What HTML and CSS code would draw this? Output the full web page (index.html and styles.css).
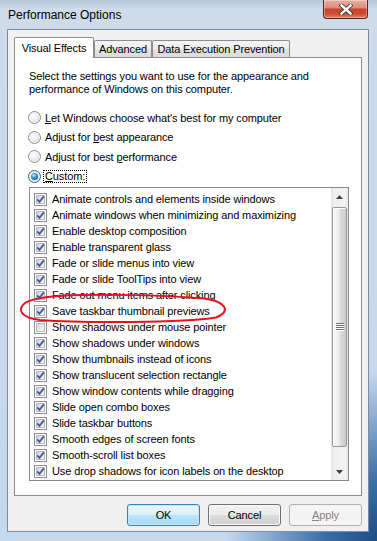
FILE: index.html
```html
<!DOCTYPE html>
<html lang="en">
<head>
<meta charset="utf-8">
<title>Performance Options</title>
<link rel="stylesheet" href="styles.css">
</head>
<body>
<div class="window">
  <div class="titlebar">
    <span class="title">Performance Options</span>
    <div class="close">
      <svg width="14" height="11" viewBox="0 0 14 11"><path class="x-out" d="M2.5 1.5 L11.5 9.5 M11.5 1.5 L2.5 9.5"/><path class="x-in" d="M2.5 1.5 L11.5 9.5 M11.5 1.5 L2.5 9.5"/></svg>
    </div>
  </div>
  <div class="client">
    <div class="tabs">
      <div class="tab active">Visual Effects</div>
      <div class="tab tab-adv">Advanced</div>
      <div class="tab tab-dep">Data Execution Prevention</div>
    </div>
    <div class="panel">
      <p class="intro">Select the settings you want to use for the appearance and<br>performance of Windows on this computer.</p>
      <div class="radios">
        <div class="radio-row"><span class="radio"></span><span class="lbl"><u>L</u>et Windows choose what's best for my computer</span></div>
        <div class="radio-row"><span class="radio"></span><span class="lbl">Adjust for <u>b</u>est appearance</span></div>
        <div class="radio-row"><span class="radio"></span><span class="lbl">Adjust for best <u>p</u>erformance</span></div>
        <div class="radio-row"><span class="radio on"><span class="dot"></span></span><span class="lbl focus"><u>C</u>ustom:</span></div>
      </div>
      <div class="listbox">
        <div class="items">
          <div class="item"><span class="check"><svg viewBox="0 0 11 11"><path d="M2.2 5.4 L4.4 7.9 L8.9 2.4"/></svg></span>Animate controls and elements inside windows</div>
          <div class="item"><span class="check"><svg viewBox="0 0 11 11"><path d="M2.2 5.4 L4.4 7.9 L8.9 2.4"/></svg></span>Animate windows when minimizing and maximizing</div>
          <div class="item"><span class="check"><svg viewBox="0 0 11 11"><path d="M2.2 5.4 L4.4 7.9 L8.9 2.4"/></svg></span>Enable desktop composition</div>
          <div class="item"><span class="check"><svg viewBox="0 0 11 11"><path d="M2.2 5.4 L4.4 7.9 L8.9 2.4"/></svg></span>Enable transparent glass</div>
          <div class="item"><span class="check"><svg viewBox="0 0 11 11"><path d="M2.2 5.4 L4.4 7.9 L8.9 2.4"/></svg></span>Fade or slide menus into view</div>
          <div class="item"><span class="check"><svg viewBox="0 0 11 11"><path d="M2.2 5.4 L4.4 7.9 L8.9 2.4"/></svg></span>Fade or slide ToolTips into view</div>
          <div class="item"><span class="check"><svg viewBox="0 0 11 11"><path d="M2.2 5.4 L4.4 7.9 L8.9 2.4"/></svg></span>Fade out menu items after clicking</div>
          <div class="item"><span class="check"><svg viewBox="0 0 11 11"><path d="M2.2 5.4 L4.4 7.9 L8.9 2.4"/></svg></span>Save taskbar thumbnail previews</div>
          <div class="item"><span class="check"></span>Show shadows under mouse pointer</div>
          <div class="item"><span class="check"><svg viewBox="0 0 11 11"><path d="M2.2 5.4 L4.4 7.9 L8.9 2.4"/></svg></span>Show shadows under windows</div>
          <div class="item"><span class="check"><svg viewBox="0 0 11 11"><path d="M2.2 5.4 L4.4 7.9 L8.9 2.4"/></svg></span>Show thumbnails instead of icons</div>
          <div class="item"><span class="check"><svg viewBox="0 0 11 11"><path d="M2.2 5.4 L4.4 7.9 L8.9 2.4"/></svg></span>Show translucent selection rectangle</div>
          <div class="item"><span class="check"><svg viewBox="0 0 11 11"><path d="M2.2 5.4 L4.4 7.9 L8.9 2.4"/></svg></span>Show window contents while dragging</div>
          <div class="item"><span class="check"><svg viewBox="0 0 11 11"><path d="M2.2 5.4 L4.4 7.9 L8.9 2.4"/></svg></span>Slide open combo boxes</div>
          <div class="item"><span class="check"><svg viewBox="0 0 11 11"><path d="M2.2 5.4 L4.4 7.9 L8.9 2.4"/></svg></span>Slide taskbar buttons</div>
          <div class="item"><span class="check"><svg viewBox="0 0 11 11"><path d="M2.2 5.4 L4.4 7.9 L8.9 2.4"/></svg></span>Smooth edges of screen fonts</div>
          <div class="item"><span class="check"><svg viewBox="0 0 11 11"><path d="M2.2 5.4 L4.4 7.9 L8.9 2.4"/></svg></span>Smooth-scroll list boxes</div>
          <div class="item"><span class="check"><svg viewBox="0 0 11 11"><path d="M2.2 5.4 L4.4 7.9 L8.9 2.4"/></svg></span>Use drop shadows for icon labels on the desktop</div>
        </div>
        <div class="scrollbar">
          <div class="sb-btn"><svg width="7" height="4" viewBox="0 0 7 4"><polygon points="3.5,0 7,4 0,4"/></svg></div>
          <div class="sb-track">
            <div class="thumb">
              <svg width="8" height="8" viewBox="0 0 8 8"><path class="g-d" d="M0 0.5 H8 M0 2.5 H8 M0 4.5 H8 M0 6.5 H8"/><path class="g-l" d="M0 1.5 H8 M0 3.5 H8 M0 5.5 H8 M0 7.5 H8"/></svg>
            </div>
          </div>
          <div class="sb-btn"><svg width="7" height="4" viewBox="0 0 7 4"><polygon points="0,0 7,0 3.5,4"/></svg></div>
        </div>
      </div>
    </div>
    <div class="buttons">
      <div class="btn btn-ok">OK</div>
      <div class="btn btn-cancel">Cancel</div>
      <div class="btn btn-apply"><span><u>A</u>pply</span></div>
    </div>
  </div>
  <svg class="annot" width="377" height="541" viewBox="0 0 377 541"><path d="M62 295.5 C105 294, 165 295, 204 298.5 C224 301, 233 311, 216 317.5 C182 323, 82 323, 40 320 C22 318, 16 310, 25 303 C32 298.5, 46 296.5, 68 295.5"/></svg>
</div>
</body>
</html>
```
FILE: styles.css
```css
* { box-sizing: border-box; }
html, body { margin: 0; padding: 0; }
body {
  width: 377px;
  height: 541px;
  overflow: hidden;
  font-family: "Liberation Sans", Arial, sans-serif;
  font-size: 11px;
  letter-spacing: -0.12px;
  color: #000;
  background: #d6e2ee;
}
.window {
  position: relative;
  width: 377px;
  height: 541px;
  display: flex;
  flex-direction: column;
  background:
    radial-gradient(ellipse 150px 170px at 100% 100%, #1d4d85 0%, #3b6ea8 35%, rgba(150,185,225,0) 100%),
    linear-gradient(180deg, #b7c8dc 0px, #cddbea 9px, #c9d9eb 60%, #c4d8ee 100%);
}
.titlebar {
  height: 29px;
  display: flex;
  justify-content: space-between;
  align-items: flex-start;
  flex: none;
}
.title {
  font-size: 12px;
  letter-spacing: 0;
  line-height: 30px;
  padding-left: 8px;
  color: #000;
}
.close {
  width: 45px;
  height: 19px;
  margin-right: 9px;
  border: 1px solid #5a231a;
  border-top: none;
  border-radius: 0 0 4px 4px;
  background: linear-gradient(180deg, #eab0a2 0%, #dc8d7b 42%, #c8432a 52%, #cf4e33 78%, #e0846b 100%);
  box-shadow: inset 0 0 0 1px rgba(255,255,255,0.35);
  display: flex;
  align-items: center;
  justify-content: center;
}
.close svg { display: block; }
.x-out { fill: none; stroke: #3a3a3a; stroke-width: 4.2; stroke-linecap: square; }
.x-in { fill: none; stroke: #ffffff; stroke-width: 2.4; stroke-linecap: square; }
.client {
  margin: 0 8px 0 7px;
  height: 503px;
  flex: none;
  border: 1px solid #7b8ca2;
  background: #f0f0f0;
  padding: 7px 6px 0 6px;
  display: flex;
  flex-direction: column;
}
.tabs {
  display: flex;
  align-items: flex-end;
  height: 20px;
  flex: none;
}
.tab {
  height: 17px;
  border: 1px solid #898c95;
  border-bottom: none;
  border-radius: 2px 2px 0 0;
  background: linear-gradient(180deg, #f4f4f4 0%, #ececec 50%, #e2e2e2 51%, #dcdcdc 100%);
  display: flex;
  align-items: center;
  justify-content: center;
  white-space: nowrap;
  line-height: 1;
}
.tab.active {
  width: 80px;
  height: 21px;
  margin-bottom: -1px;
  background: #fff;
  position: relative;
  z-index: 1;
}
.tab-adv { width: 58px; }
.tab-dep { width: 138px; }
.panel {
  height: 439px;
  flex: none;
  border: 1px solid #898c95;
  background: #fff;
  padding: 12px 11px 0 14px;
}
.intro {
  margin: 0;
  line-height: 13px;
}
.radios { margin-top: 12px; }
.radio-row {
  display: flex;
  align-items: center;
  height: 19.5px;
}
.radio {
  width: 13px;
  height: 13px;
  flex: none;
  margin-left: -1px;
  border-radius: 50%;
  border: 1px solid #8e8f8f;
  background: radial-gradient(circle at 40% 38%, #ffffff 0%, #eeeeee 40%, #d2d2d2 85%, #c6c6c6 100%);
  box-shadow: inset 0 0 0 1px rgba(255,255,255,0.7);
  display: flex;
  align-items: center;
  justify-content: center;
}
.radio.on { border-color: #2c628b; }
.dot {
  width: 7px;
  height: 7px;
  border-radius: 50%;
  background: radial-gradient(circle at 40% 35%, #c4ecff 0%, #41a3e6 35%, #15609e 75%, #0d3f70 100%);
}
.lbl { margin-left: 4px; white-space: nowrap; }
.lbl.focus {
  margin-left: 2px;
  border: 1px dotted #000;
  padding: 0 1px;
  line-height: 11px;
}
.listbox {
  margin-top: 1px;
  width: 320px;
  height: 294px;
  border: 1px solid #828790;
  display: flex;
}
.items {
  flex: 1;
  padding: 3px 0 0 4px;
  overflow: hidden;
}
.item {
  height: 16px;
  display: flex;
  align-items: center;
  white-space: nowrap;
}
.check {
  width: 13px;
  height: 13px;
  flex: none;
  margin-right: 5px;
  border: 1px solid #8e8f8f;
  background: linear-gradient(135deg, #c8ccd2 0%, #e6e8eb 50%, #fbfbfb 100%);
  box-shadow: inset 0 0 0 1px #fff, inset 0 0 0 2px #b6bac0;
}
.check svg { display: block; width: 11px; height: 11px; }
.check path { fill: none; stroke: #4a5c9a; stroke-width: 1.9; }
.scrollbar {
  width: 17px;
  flex: none;
  display: flex;
  flex-direction: column;
  background: linear-gradient(90deg, #e2e2e2 0%, #efefef 18%, #f3f3f3 80%, #e8e8e8 100%);
}
.sb-btn {
  height: 17px;
  flex: none;
  display: flex;
  align-items: center;
  justify-content: center;
}
.sb-btn svg { display: block; }
.sb-btn polygon { fill: #404040; }
.sb-track {
  flex: 1;
  padding: 2px 1px 0;
}
.thumb {
  height: 240px;
  border: 1px solid #979797;
  border-radius: 2px;
  background: linear-gradient(90deg, #f8f8f8 0%, #ededed 45%, #dcdcdc 55%, #cbcbcb 100%);
  box-shadow: inset 1px 1px 0 #fff;
  display: flex;
  align-items: center;
  justify-content: center;
}
.thumb svg { display: block; }
.g-d { stroke: #707070; stroke-width: 1; }
.g-l { stroke: #ffffff; stroke-width: 1; }
.buttons {
  display: flex;
  justify-content: flex-end;
  gap: 8px;
  margin-top: 8px;
}
.btn {
  width: 73px;
  height: 22px;
  border-radius: 3px;
  display: flex;
  align-items: center;
  justify-content: center;
  line-height: 1;
}
.btn-ok {
  border: 1px solid #3c7fb1;
  background: linear-gradient(180deg, #eaf6fd 0%, #d9f0fc 50%, #bee6fd 51%, #a7d9f5 100%);
  box-shadow: inset 0 0 0 1px #c6e8f8;
}
.btn-cancel {
  border: 1px solid #707070;
  background: linear-gradient(180deg, #f2f2f2 0%, #ebebeb 50%, #dddddd 51%, #cfcfcf 100%);
  box-shadow: inset 0 0 0 1px #fbfbfb;
}
.btn-apply {
  border: 1px solid #adb2b5;
  background: #f4f4f4;
  color: #838383;
}
.annot {
  position: absolute;
  left: 0;
  top: 0;
  pointer-events: none;
}
.annot path {
  fill: none;
  stroke: #e8101c;
  stroke-width: 2;
  stroke-linecap: round;
}
```
